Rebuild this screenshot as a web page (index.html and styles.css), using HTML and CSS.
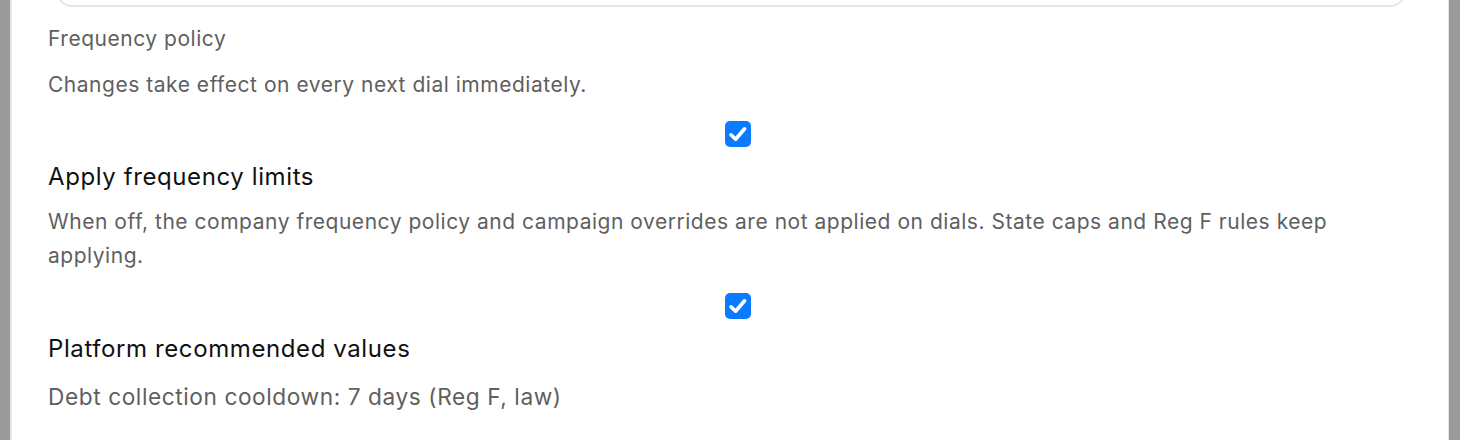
FILE: index.html
```html
<!DOCTYPE html>
<html lang="en">
<head>
<meta charset="utf-8">
<title>Frequency policy</title>
<link rel="stylesheet" href="styles.css">
</head>
<body>
<div class="frame">
  <div class="panel">
    <div class="prev-box"></div>
    <div class="section-label">Frequency policy</div>
    <p class="desc first">Changes take effect on every next dial immediately.</p>

    <div class="check-row">
      <span class="check" role="checkbox" aria-checked="true">
        <svg viewBox="0 0 26 26" width="26" height="26" aria-hidden="true">
          <path d="M6 13.8 L10.6 18.2 L19.6 7.8" fill="none" stroke="#fff" stroke-width="3.6" stroke-linecap="round" stroke-linejoin="round"/>
        </svg>
      </span>
    </div>
    <h3 class="title">Apply frequency limits</h3>
    <p class="desc">When off, the company frequency policy and campaign overrides are not applied on dials. State caps and Reg F rules keep applying.</p>

    <div class="check-row second">
      <span class="check" role="checkbox" aria-checked="true">
        <svg viewBox="0 0 26 26" width="26" height="26" aria-hidden="true">
          <path d="M6 13.8 L10.6 18.2 L19.6 7.8" fill="none" stroke="#fff" stroke-width="3.6" stroke-linecap="round" stroke-linejoin="round"/>
        </svg>
      </span>
    </div>
    <h3 class="title">Platform recommended values</h3>
    <p class="desc value">Debt collection cooldown: 7 days (Reg F, law)</p>
  </div>
</div>
</body>
</html>
```

FILE: styles.css
```css
html, body {
  margin: 0;
  padding: 0;
  height: 100%;
}
body {
  background: #9a9a9a;
  font-family: Inter, "Noto Sans", Arial, sans-serif;
  overflow: hidden;
}
.frame {
  padding: 0 11px 0 10px;
  height: 100%;
  box-sizing: border-box;
}
.panel {
  display: flow-root;
  background: #fff;
  height: 100%;
  box-sizing: border-box;
  border-left: 2px solid #e4e4e4;
  border-right: 1px solid #e4e4e4;
  padding: 0 36px;
  overflow: hidden;
}
.prev-box {
  height: 40px;
  margin: -37px 6px 0 8px;
  border: 2px solid #e6e6e6;
  border-radius: 16px;
}
.section-label {
  margin-top: 17px;
  font-size: 21px;
  line-height: 30px;
  letter-spacing: 0.025em;
  color: #5f5f5f;
}
.desc {
  margin: 0;
  font-size: 21px;
  line-height: 34px;
  letter-spacing: 0.025em;
  color: #5f5f5f;
}
.desc.first {
  margin-top: 14px;
}
.desc.value {
  font-size: 22.7px;
  line-height: 36px;
  margin-top: 14px;
}
.check-row {
  display: flex;
  justify-content: center;
  padding-left: 16px;
  margin-top: 19px;
}
.check-row.second {
  margin-top: 20px;
}
.check {
  width: 26px;
  height: 26px;
  border-radius: 5px;
  background: #0a7bff;
  display: block;
}
.check svg {
  display: block;
}
.title {
  margin: 14px 0 12px;
  font-size: 24px;
  line-height: 32px;
  font-weight: 400;
  letter-spacing: 0.025em;
  color: #111;
}
.title + .desc.value {
  margin-top: 14px;
}
```
